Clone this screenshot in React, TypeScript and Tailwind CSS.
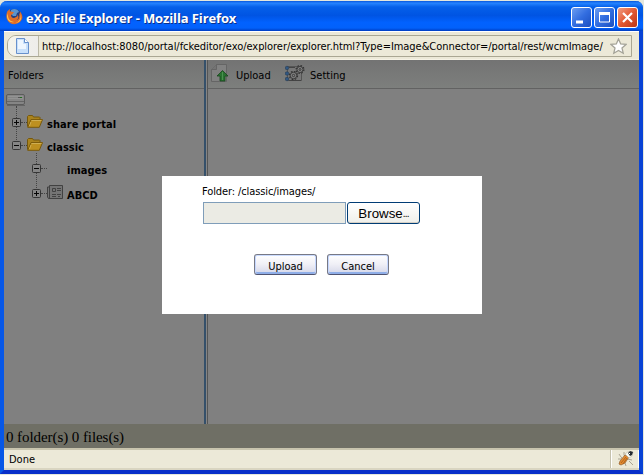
import type { ReactNode } from "react";

const ui = "font-['DejaVu_Sans_Condensed','DejaVu_Sans',sans-serif] [font-stretch:condensed]";

function Firefox() {
  return (
    <svg width="17" height="17" viewBox="0 0 17 17">
      <circle cx="8.5" cy="8" r="7" fill="#203f82" />
      <path d="M5 2c3-2 7-1 8 2l-2 1-1 3-3 0-2-2z" fill="#5b94ce" />
      <path d="M1 4C2 2 3 2 4 1l-.2 2.2C5 3 6 4 8 4L6.600 6 5 7c0 3 3 4 5 2 1.500-1 2-1 1-2.500 2 1 2 4-.5 5.500C13 12 14 8 13 5l1 1-.2-2.800C16 6 17 8.500 16 11c-2 5-8 6.500-12 4C0 12.500-.2 8 1 4z" fill="#df6d28" />
      <path d="M2 5c-.5 5 1 8 6 9-4 1-7-2-7-6zM14.500 6c1 5-2 8-5 9 4 0 7-4 5-9z" fill="#ffc44c" />
    </svg>
  );
}

function PageIcon() {
  return (
    <svg width="14" height="16" viewBox="0 0 14 16">
      <path d="M.5.5h8l4 4v11H.5z" fill="#c8e0fb" stroke="#6790cc" />
      <path d="M2 2h5v4h3v5H2z" fill="#eef6ff" />
      <path d="M8.500.5v4h4" fill="#fff" stroke="#6790cc" />
    </svg>
  );
}

function FolderIcon() {
  return (
    <svg width="16" height="13" viewBox="0 0 16 13">
      <path d="M.5 11.500v-10l1-1h4l1 1.500h6l.5.500V5" fill="#a9831e" stroke="#76580c" />
      <path d="M.7 12.300 4 4.600h11.500l-3.200 7.700z" fill="#bd9020" stroke="#79590a" />
      <path d="M4.500 5.500h10M4 7 2.500 11" stroke="#ceae52" />
    </svg>
  );
}

function Toggle({ open }: { open?: boolean }) {
  return (
    <svg width="9" height="9" viewBox="0 0 9 9" className="shrink-0">
      <rect x=".5" y=".5" width="8" height="8" rx="1" fill="#858585" stroke="#353535" />
      <path d={open ? "M2 4.500h5" : "M2 4.500h5M4.500 2v5"} stroke="#050505" />
    </svg>
  );
}

function NewsIcon() {
  return (
    <svg width="16" height="16" viewBox="0 0 16 16" fill="none">
      <path d="M2.500 1.500h13v13h-14L.5 13V3h2z" fill="#747474" stroke="#414141" />
      <path d="M2.500 2v12M5.500 4.500h3v3h-3zM10 4.500h4M10 6.500h4M5 10.500h4M10 10.500h4M5 12.500h4M11 12.500h2" stroke="#424242" />
    </svg>
  );
}

function DriveIcon() {
  return (
    <svg width="20" height="12" viewBox="0 0 20 12">
      <rect x=".5" y=".5" width="18" height="10" rx="1.500" fill="#858585" stroke="#5c5c5c" />
      <path d="M2 2.500h15M2 4.500h15" stroke="#939393" />
      <path d="M1 7.500h17M1 11.500h18" stroke="#656565" />
      <path d="M12 3.500h2" stroke="#555" /><path d="M14 3.500h2" stroke="#226a20" />
    </svg>
  );
}

function UploadIcon() {
  return (
    <svg width="17" height="19" viewBox="0 0 17 19">
      <path d="M5.500.5h10v17H.5v-12z" fill="#818181" stroke="#656565" />
      <path d="M5.500.5v5h-5" fill="#747474" stroke="#656565" />
      <path d="M11.500 6.500 17 12h-3v5H9v-5H6z" fill="#287130" stroke="#17461c" strokeWidth=".8" />
      <path d="M11.500 8v8" stroke="#4b9150" />
    </svg>
  );
}

function SettingIcon() {
  return (
    <svg width="20" height="17" viewBox="0 0 20 17" fill="none">
      <path d="M2.500 1.500h14v14h-14z" fill="#777" stroke="#555" />
      <path d="M4 2.500h6M4 15.500h12" stroke="#444" />
      <g fill="#315782" stroke="#20364d" strokeWidth=".5">
        <circle cx="2" cy="3" r="1.800" /><circle cx="2" cy="8.500" r="1.800" /><circle cx="2" cy="14" r="1.800" />
      </g>
      <circle cx="8.500" cy="10.500" r="4" stroke="#303030" strokeWidth="1.300" strokeDasharray="1.700 1.442" />
      <circle cx="8.500" cy="10.500" r="3.200" fill="#858585" stroke="#383838" />
      <circle cx="8.500" cy="10.500" r="1.200" stroke="#383838" />
      <circle cx="15" cy="4.500" r="3.900" stroke="#303030" strokeWidth="1.200" strokeDasharray="1.600 1.463" />
      <circle cx="15" cy="4.500" r="3" fill="#858585" stroke="#383838" />
      <circle cx="15" cy="4.500" r="1" stroke="#383838" />
    </svg>
  );
}

function BugIcon() {
  return (
    <svg width="17" height="16" viewBox="0 0 17 16" fill="none">
      <path d="M2 3l2 3 2 2M7 1v3l2 3M1 8h4M3 14l1-3M9 15l-1-3M15 9l-5-1M16 14l-4-4" stroke="#aaa492" />
      <path d="M3 10 8 4l4 2-4 6-4 2-2-1z" fill="#e58c30" stroke="#906030" strokeWidth=".7" />
      <path d="M4 12 9 6M6 13l4-6" stroke="#a35b1b" strokeWidth=".8" />
      <path d="m8 3 4-3 4 1-1 4-3 2z" fill="#f8faf2" stroke="#aaa492" strokeWidth=".5" />
      <path d="m11 2 2-2 3 1-1 3-2 1z" fill="#252b31" />
      <path d="m12 2 1 1" stroke="#fff" />
    </svg>
  );
}

function CaptionButton({ red, children }: { red?: boolean; children: ReactNode }) {
  return (
    <div className={`flex h-[21px] w-[21px] items-center justify-center rounded-[3px] border border-white ${red ? "bg-linear-to-br from-[#ef9b80] via-[#e35832] to-[#ba3514]" : "bg-linear-to-br from-[#6c9df1] via-[#326de0] to-[#1b4ec0]"}`}>
      <svg width="19" height="19" viewBox="0 0 19 19" fill="none" stroke="#fff">{children}</svg>
    </div>
  );
}

function DialogButton({ children, className }: { children: ReactNode; className: string }) {
  return (
    <div className={`${ui} flex h-[21px] justify-center rounded-[3px] border border-[#777986] border-b-[#505471] bg-linear-to-b from-white via-[#efeff6] to-[#d4d6e8] pt-[4px] text-[11px] leading-[16px] shadow-[inset_0_1px_#cbdcff,inset_1px_0_#c5d7ff,inset_-1px_0_#c5d7ff,inset_0_-2px_#8faee8] ${className}`}>
      {children}
    </div>
  );
}

export default function App() {
  return (
    <div className={`${ui} relative h-[475px] w-[644px] overflow-hidden bg-[#e4e7dc] pt-px text-[11px] text-black`}>
      <div className="flex h-[473px] w-[643px] flex-col rounded-t-[7px] border-b-4 border-l-4 border-r-4 border-b-[#082fc9] border-l-[#0757e7] border-r-[#0842d5] bg-[#ece9d8]">
        <header className="-mx-1 flex h-[30px] shrink-0 items-center rounded-t-[7px] bg-[linear-gradient(#0756dc_0,#2684ff_7%,#0560e9_20%,#0054e3_48%,#0262ff_72%,#0261fb_90%,#003dc1_100%)] pl-[6px] pr-[5px]">
          <Firefox />
          <h1 className="ml-[3px] mt-[3px] flex-1 whitespace-nowrap font-['Open_Sans',sans-serif] text-[13px] font-bold leading-[20px] tracking-[-0.12px] text-white [font-stretch:normal] [text-shadow:1px_1px_#0b318b]">eXo File Explorer - Mozilla Firefox</h1>
          <div className="mt-[3px] flex gap-[2px]">
            <CaptionButton><path d="M4 14h7" strokeWidth="3" /></CaptionButton>
            <CaptionButton><path d="M4.500 5h10v9h-10z" /><path d="M4 5.500h11" strokeWidth="3" /></CaptionButton>
            <CaptionButton red><path d="m5 5 9 9M14 5l-9 9" strokeWidth="2.200" /></CaptionButton>
          </div>
        </header>
        <div className="h-[29px] shrink-0 border-t border-white bg-[#ece9d8] px-[3px] pt-[3px] shadow-[inset_0_-1px_#f5f2e5]">
          <div className="flex h-[22px] w-[625px] items-center rounded-l-[9px] border border-[#aaa793] bg-[#ece9d8] pr-[4px]">
            <div className="flex h-full w-[31px] shrink-0 items-center justify-center rounded-l-[8px] border-r border-[#bbb8a6] bg-linear-to-r from-[#f5f4ed] to-[#eeedea]"><PageIcon /></div>
            <span className="ml-[3px] mt-[3px] flex-1 whitespace-nowrap tracking-[-0.048px]">http://localhost:8080/portal/fckeditor/exo/explorer/explorer.html?Type=Image&amp;Connector=/portal/rest/wcmImage/</span>
            <svg width="17" height="17" viewBox="0 0 17 17"><path d="m8.500 1 2.200 4.900 5.300.5-4 3.500 1.200 5.300-4.700-2.800-4.700 2.800L5 9.900 1 6.400l5.300-.5z" fill="#fff" stroke="#a4a398" strokeWidth="1.300" /></svg>
          </div>
        </div>
        <main className="flex h-[364px] shrink-0 bg-[#808080]">
          <aside className="w-[200px] shrink-0">
            <div className="flex h-[29px] items-center border-b border-[#626262] bg-linear-to-b from-[#737373] to-[#7d7f7d] pl-[4px] pt-[4px]">Folders</div>
            <div className="relative h-[130px] font-bold">
              <div className="absolute left-[12px] top-[17px] h-[42px] border-l border-dotted border-[#444]" />
              <div className="absolute left-[32px] top-[64px] h-[43px] border-l border-dotted border-[#444]" />
              <div className="absolute left-[2px] top-[5px]"><DriveIcon /></div>
              <div className="absolute left-[8px] top-[25px] flex h-[16px] items-center"><Toggle /><i className="w-[6px] border-t border-dotted border-[#444]" /><div className="-mt-px"><FolderIcon /></div><span className="ml-[4px] mt-[6px] tracking-[0.08px]">share portal</span></div>
              <div className="absolute left-[8px] top-[48px] flex h-[16px] items-center"><Toggle open /><i className="w-[6px] border-t border-dotted border-[#444]" /><div className="-mt-px"><FolderIcon /></div><span className="ml-[4px] mt-[6px]">classic</span></div>
              <div className="absolute left-[28px] top-[71px] flex h-[16px] items-center"><Toggle open /><i className="w-[6px] border-t border-dotted border-[#444]" /><span className="ml-[20px] mt-[6px]">images</span></div>
              <div className="absolute left-[28px] top-[96px] flex h-[16px] items-center"><Toggle /><i className="w-[6px] border-t border-dotted border-[#444]" /><div className="-mt-[2px]"><NewsIcon /></div><span className="ml-[4px] mt-[6px]">ABCD</span></div>
            </div>
          </aside>
          <div className="w-[4px] shrink-0 border-l-2 border-r border-l-[#35506a] border-r-[#555] bg-[#858585]" />
          <section className="flex-1">
            <div className="flex h-[29px] items-center border-b border-[#626262] bg-linear-to-b from-[#737373] to-[#7d7f7d] pl-[3px]">
              <div className="-mt-[2px]"><UploadIcon /></div><span className="ml-[8px] mt-[4px] w-[49px]">Upload</span><div className="-mt-[2px]"><SettingIcon /></div><span className="ml-[5px] mt-[4px]">Setting</span>
            </div>
          </section>
        </main>
        <div className="flex h-[24px] shrink-0 items-center bg-[#6f6f65] pl-[2px] pt-[2px] font-['Liberation_Serif',serif] text-[15px] tracking-[-0.07px]">0 folder(s) 0 files(s)</div>
        <footer className="flex h-[22px] shrink-0 items-center border-b-2 border-t-2 border-b-[#d9d5c1] border-t-[#c8c4ae] bg-[#ece9d8] pl-[5px]">
          <span className="mt-[2px] flex-1">Done</span>
          <div className="flex h-full w-[28px] items-center justify-center border-l border-r border-white shadow-[-1px_0_#c5c1ad]"><BugIcon /></div>
        </footer>
      </div>
      <div role="dialog" className="absolute left-[162px] top-[176px] h-[138px] w-[320px] bg-white pl-[40px] pt-[8px]">
        <div className="h-[18px] leading-[16px] tracking-[-0.1px]">Folder: /classic/images/</div>
        <div className="flex gap-px pl-px">
          <div className="h-[22px] w-[143px] border border-[#7f9db9] bg-[#ebebe4]" />
          <div className="flex h-[22px] w-[73px] items-center justify-center rounded-[3px] border border-[#003c74] bg-linear-to-b from-white to-[#efefea] pt-px font-['Liberation_Sans',sans-serif] text-[13.3px] shadow-[inset_0_-1px_#d6d0c5]">Browse<span className="text-[10px] tracking-[-0.8px]">...</span></div>
        </div>
        <div className="mt-[30px] flex gap-[10px] pl-[52px]">
          <DialogButton className="w-[63px]">Upload</DialogButton>
          <DialogButton className="w-[62px]">Cancel</DialogButton>
        </div>
      </div>
    </div>
  );
}
